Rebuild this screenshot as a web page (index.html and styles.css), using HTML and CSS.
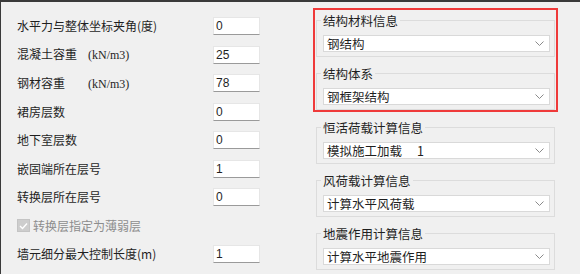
FILE: index.html
```html
<!DOCTYPE html>
<html lang="zh-CN">
<head>
    <meta charset="UTF-8">
    <meta name="viewport" content="width=device-width, initial-scale=1.0">
    <title>总信息</title>
    <link rel="stylesheet" href="styles.css">
</head>
<body>
    <div class="frame">
        <!-- 左侧参数 -->
        <div class="params">
            <div class="row"><span class="label">水平力与整体坐标夹角(度)</span><div class="field">0</div></div>
            <div class="row"><span class="label"><span class="name">混凝土容重</span><span class="unit">(kN/m3)</span></span><div class="field">25</div></div>
            <div class="row"><span class="label"><span class="name">钢材容重</span><span class="unit">(kN/m3)</span></span><div class="field">78</div></div>
            <div class="row"><span class="label">裙房层数</span><div class="field">0</div></div>
            <div class="row"><span class="label">地下室层数</span><div class="field">0</div></div>
            <div class="row"><span class="label">嵌固端所在层号</span><div class="field">1</div></div>
            <div class="row"><span class="label">转换层所在层号</span><div class="field">0</div></div>
            <div class="row">
                <span class="checkbox">
                    <svg width="9" height="8" viewBox="0 0 9 8"><polyline points="1,4 3.5,6.5 8,1.5" fill="none" stroke="#fff" stroke-width="1.4"/></svg>
                </span>
                <span class="check-label">转换层指定为薄弱层</span>
            </div>
            <div class="row"><span class="label">墙元细分最大控制长度(m)</span><div class="field">1</div></div>
            <div class="row"><span class="label">弹性板细分最大控制长度(m)</span><div class="field">1</div></div>
        </div>

        <!-- 右侧分组 -->
        <div class="panels">
            <div class="mark">
                <div class="group">
                    <div class="group-title">结构材料信息</div>
                    <div class="combo"><span>钢结构</span><svg class="arrow" width="9" height="5" viewBox="0 0 9 5"><polyline points="0.5,0.5 4.5,4.5 8.5,0.5" fill="none" stroke="#8a8a8a"/></svg></div>
                </div>
                <div class="group">
                    <div class="group-title">结构体系</div>
                    <div class="combo"><span>钢框架结构</span><svg class="arrow" width="9" height="5" viewBox="0 0 9 5"><polyline points="0.5,0.5 4.5,4.5 8.5,0.5" fill="none" stroke="#8a8a8a"/></svg></div>
                </div>
            </div>
            <div class="group">
                <div class="group-title">恒活荷载计算信息</div>
                <div class="combo"><span>模拟施工加载<span class="num">1</span></span><svg class="arrow" width="9" height="5" viewBox="0 0 9 5"><polyline points="0.5,0.5 4.5,4.5 8.5,0.5" fill="none" stroke="#8a8a8a"/></svg></div>
            </div>
            <div class="group">
                <div class="group-title">风荷载计算信息</div>
                <div class="combo"><span>计算水平风荷载</span><svg class="arrow" width="9" height="5" viewBox="0 0 9 5"><polyline points="0.5,0.5 4.5,4.5 8.5,0.5" fill="none" stroke="#8a8a8a"/></svg></div>
            </div>
            <div class="group">
                <div class="group-title">地震作用计算信息</div>
                <div class="combo"><span>计算水平地震作用</span><svg class="arrow" width="9" height="5" viewBox="0 0 9 5"><polyline points="0.5,0.5 4.5,4.5 8.5,0.5" fill="none" stroke="#8a8a8a"/></svg></div>
            </div>
        </div>
    </div>
</body>
</html>
```

FILE: styles.css
```css
body{
    margin: 0;
    background-color: #f0f0f0;
    font-family: "Noto Sans CJK SC", "Noto Sans", sans-serif;
    font-size: 12px;
    color: #1f1f1f;
}
.frame{
    display: flex;
    height: 274px;
    box-sizing: border-box;
    border-top: 2px solid #3a3a3a;
    border-left: 1px solid #3a3a3a;
    overflow: hidden;
}

/* left column */
.params{
    flex: 0 0 314px;
    box-sizing: border-box;
    padding: 10px 0 0 16px;
}
.row{
    display: flex;
    align-items: center;
    height: 28.5px;
}
.label{
    width: 196px;
    line-height: 16px;
    white-space: nowrap;
}
.name{
    display: inline-block;
    width: 71px;
}
.unit{
    font-family: "Liberation Serif", serif;
    font-size: 12px;
}
.field{
    width: 47px;
    height: 18px;
    box-sizing: border-box;
    background-color: #fff;
    border: 1px solid #e6e6e6;
    border-bottom-color: #9a9a9a;
    padding-left: 2px;
    font-family: "Liberation Sans", sans-serif;
    font-size: 12px;
    line-height: 16px;
}
.checkbox{
    display: flex;
    align-items: center;
    justify-content: center;
    width: 13px;
    height: 13px;
    box-sizing: border-box;
    background-color: #cdcdcd;
    border: 1px solid #c4c4c4;
}
.check-label{
    margin-left: 3px;
    color: #8d8d8d;
    line-height: 16px;
}

/* right column */
.panels{
    flex: 0 0 239px;
    margin-left: 1px;
}
.mark{
    margin: 6px -3px 0;
    padding: 10px 1px 0;
    border: 2px solid #ef3a3a;
}
.group{
    border: 1px solid #dcdcdc;
    padding: 0 4px 4px 6px;
}
.group + .group{
    margin-top: 16px;
}
.mark + .group{
    margin-top: 15px;
}
.group-title{
    width: fit-content;
    margin: -8px 0 0 -2px;
    padding: 0 2px;
    background-color: #f0f0f0;
    font-size: 12.5px;
    line-height: 15px;
}
.combo{
    display: flex;
    align-items: center;
    justify-content: space-between;
    height: 17px;
    margin-top: 7px;
    box-sizing: border-box;
    background-color: #fff;
    border: 1px solid #d9d9d9;
    padding: 0 5px 0 3px;
    font-size: 12.5px;
    line-height: 15px;
}
.num{
    margin-left: 15px;
}
.arrow{
    display: block;
}
```
